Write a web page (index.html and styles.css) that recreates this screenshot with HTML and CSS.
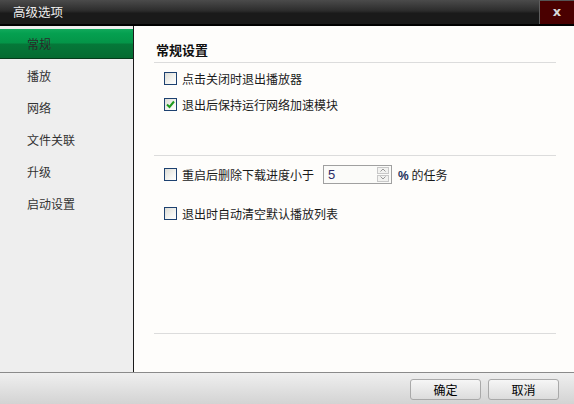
FILE: index.html
```html
<!DOCTYPE html>
<html lang="zh-CN">
<head>
<meta charset="utf-8">
<title>高级选项</title>
<link rel="stylesheet" href="styles.css">
</head>
<body>
<div class="window">
  <div class="titlebar">
    <span class="title">高级选项</span>
    <div class="close"><span>x</span></div>
  </div>
  <div class="main">
    <nav class="sidebar">
      <div class="nav-item active">常规</div>
      <div class="nav-item">播放</div>
      <div class="nav-item">网络</div>
      <div class="nav-item">文件关联</div>
      <div class="nav-item">升级</div>
      <div class="nav-item">启动设置</div>
    </nav>
    <section class="content">
      <div class="section first">
        <div class="heading">常规设置</div>
        <div class="rows">
          <label class="row"><span class="cb"></span><span>点击关闭时退出播放器</span></label>
          <label class="row"><span class="cb"><svg viewBox="0 0 11 11" width="11" height="11"><path d="M2 5.5 L4.5 8 L9 2.5" fill="none" stroke="#1e9a1e" stroke-width="2"/></svg></span><span>退出后保持运行网络加速模块</span></label>
        </div>
      </div>
      <div class="section second">
        <div class="row"><span class="cb"></span><span>重启后删除下载进度小于</span>
          <div class="spin">
            <span class="spin-val">5</span>
            <div class="spin-btns">
              <span class="sb"><svg viewBox="0 0 10 6" width="10" height="6"><path d="M2.5 4.5 L5 2 L7.5 4.5" fill="none" stroke="#999" stroke-width="1"/></svg></span>
              <span class="sb"><svg viewBox="0 0 10 6" width="10" height="6"><path d="M2.5 1.5 L5 4 L7.5 1.5" fill="none" stroke="#999" stroke-width="1"/></svg></span>
            </div>
          </div>
          <span class="pct"><b>%</b> 的任务</span>
        </div>
        <div class="row r4"><span class="cb"></span><span>退出时自动清空默认播放列表</span></div>
      </div>
    </section>
  </div>
  <div class="footer">
    <button class="btn">确定</button>
    <button class="btn">取消</button>
  </div>
</div>
</body>
</html>
```
FILE: styles.css
```css
html, body {
  margin: 0;
  padding: 0;
}
body {
  width: 574px;
  height: 404px;
  overflow: hidden;
  font-family: "Noto Sans CJK SC", "Liberation Sans", sans-serif;
  font-size: 12px;
  color: #222;
}
.window {
  width: 574px;
  height: 404px;
  display: flex;
  flex-direction: column;
}
.titlebar {
  height: 24px;
  border-bottom: 2px solid #000;
  background: linear-gradient(#4b4b4b 0%, #2c2c2c 45%, #1a1a1a 55%, #1a1a1a 100%);
  display: flex;
  align-items: center;
  justify-content: space-between;
  flex-shrink: 0;
}
.title {
  color: #ececec;
  font-size: 12.5px;
  padding-left: 13px;
  line-height: 24px;
}
.close {
  width: 35px;
  height: 24px;
  align-self: flex-start;
  background: #4a0000;
  border-left: 1px solid #5e5e5e;
  border-top: 1px solid #555;
  box-sizing: border-box;
  display: flex;
  align-items: center;
  justify-content: center;
}
.close span {
  color: #d8d8d8;
  font-family: "DejaVu Sans", sans-serif;
  font-weight: bold;
  font-size: 13px;
  line-height: 1;
  margin-top: -2px;
}
.main {
  height: 346px;
  display: flex;
  flex-shrink: 0;
}
.sidebar {
  width: 133px;
  background: #eeeeee;
  border-right: 1px solid #1a1a1a;
  padding-top: 3px;
  display: flex;
  flex-direction: column;
}
.nav-item {
  height: 32px;
  line-height: 32px;
  padding-left: 27px;
  color: #333;
}
.nav-item.active {
  height: 29px;
  line-height: 29px;
  margin-bottom: 1px;
  color: #2a2a2a;
  border-bottom: 1px solid #053b1a;
  background: linear-gradient(#12aa5c 0%, #05a050 15%, #049548 48%, #057839 52%, #056b31 100%);
}
.content {
  flex: 1;
  background: #fefdfb;
  padding: 0 18px 0 20px;
  display: flex;
  flex-direction: column;
}
.section {
  box-sizing: border-box;
  border-bottom: 1px solid #dcdcdc;
}
.section.first {
  height: 130px;
  padding-top: 16px;
}
.section.second {
  height: 178px;
  padding-top: 5px;
}
.heading {
  font-weight: bold;
  font-size: 13px;
  line-height: 16px;
  color: #111;
  padding-left: 2px;
  padding-bottom: 4px;
  border-bottom: 1px solid #dcdcdc;
}
.rows {
  margin-top: 2px;
}
.row {
  height: 26px;
  display: flex;
  align-items: center;
  padding-left: 10px;
  color: #1a1a1a;
}
.row.r4 {
  margin-top: 13px;
}
.cb {
  width: 13px;
  height: 13px;
  box-sizing: border-box;
  border: 1px solid #1d4170;
  background: linear-gradient(135deg, #dcdcd6 0%, #f4f4f0 60%, #ffffff 100%);
  margin-right: 5px;
  display: flex;
  align-items: center;
  justify-content: center;
  flex-shrink: 0;
}
.spin {
  width: 69px;
  height: 19px;
  box-sizing: border-box;
  border: 1px solid #a0a0a0;
  background: #fbfbf9;
  margin-left: 9px;
  display: flex;
  align-items: center;
  justify-content: space-between;
}
.spin-val {
  font-family: "Liberation Sans", sans-serif;
  font-size: 13px;
  color: #2b2b66;
  padding-left: 4px;
}
.spin-btns {
  display: flex;
  flex-direction: column;
  gap: 1px;
  margin-right: 2px;
}
.sb {
  width: 12px;
  height: 7px;
  box-sizing: border-box;
  border: 1px solid #c8c8c8;
  background: #f2f2f0;
  display: flex;
  align-items: center;
  justify-content: center;
}
.sb svg {
  display: block;
}
.pct {
  margin-left: 6px;
  color: #1a1a1a;
}
.pct b {
  font-family: "Liberation Sans", sans-serif;
  font-weight: bold;
  color: #22305a;
}
.footer {
  flex: 1;
  border-top: 1px solid #8a8a8a;
  background: linear-gradient(#efefef, #d3d3d3);
  display: flex;
  justify-content: flex-end;
  align-items: flex-start;
  gap: 7px;
  padding: 6px 15px 0 0;
}
.btn {
  width: 71px;
  height: 21px;
  box-sizing: border-box;
  border: 1px solid #a9a9a9;
  border-radius: 3px;
  background: linear-gradient(#f6f6f6, #dcdcdc);
  font-family: "Noto Sans CJK SC", sans-serif;
  font-size: 12px;
  color: #000;
  padding: 0;
  line-height: 19px;
}
```
